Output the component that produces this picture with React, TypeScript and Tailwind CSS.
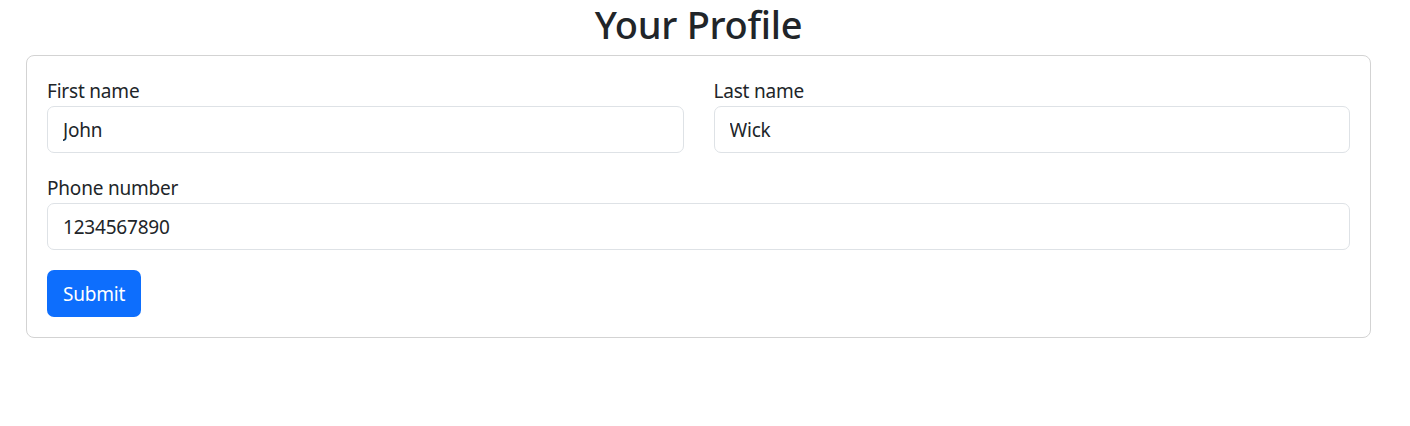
import { useState } from "react";

const font = { fontFamily: '"Noto Sans", "Segoe UI", sans-serif' };

export default function App() {
  const [firstName, setFirstName] = useState("John");
  const [lastName, setLastName] = useState("Wick");
  const [phone, setPhone] = useState("1234567890");

  const inputClass =
    "block w-full h-[47px] px-[15px] pt-[1px] rounded-[7px] border border-[#dee2e6] bg-white text-[19px] tracking-[-0.2px] text-[#212529] outline-none";
  const labelClass = "block pt-[1px] text-[19px] tracking-[-0.2px] leading-[29px]";

  return (
    <div style={font} className="min-h-screen w-[1397px] bg-white text-[#212529]">
      <h2 className="text-center text-[38px] tracking-[-0.3px] leading-[47px] pt-[1px] font-medium mb-[7px]">
        Your Profile
      </h2>
      <form
        className="mx-[26px] flex flex-col gap-[20px] rounded-[8px] border border-[#d3d3d3] p-[20px]"
        onSubmit={(e) => e.preventDefault()}
      >
        <div className="grid grid-cols-2 gap-x-[30px]">
          <div>
            <label className={labelClass}>First name</label>
            <input
              className={inputClass}
              value={firstName}
              onChange={(e) => setFirstName(e.target.value)}
            />
          </div>
          <div>
            <label className={labelClass}>Last name</label>
            <input
              className={inputClass}
              value={lastName}
              onChange={(e) => setLastName(e.target.value)}
            />
          </div>
        </div>
        <div>
          <label className={labelClass}>Phone number</label>
          <input
            className={inputClass}
            value={phone}
            onChange={(e) => setPhone(e.target.value)}
          />
        </div>
        <div className="flex">
          <button
            type="submit"
            className="h-[47px] w-[94px] pt-[1px] rounded-[7px] bg-[#0d6efd] text-[19px] tracking-[-0.2px] text-white"
          >
            Submit
          </button>
        </div>
      </form>
    </div>
  );
}
